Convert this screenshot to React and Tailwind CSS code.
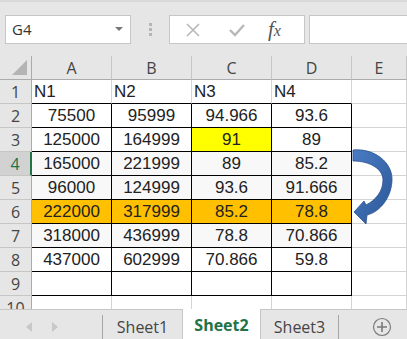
import React from "react";

const rows = [
  ["N1", "N2", "N3", "N4"],
  ["75500", "95999", "94.966", "93.6"],
  ["125000", "164999", "91", "89"],
  ["165000", "221999", "89", "85.2"],
  ["96000", "124999", "93.6", "91.666"],
  ["222000", "317999", "85.2", "78.8"],
  ["318000", "436999", "78.8", "70.866"],
  ["437000", "602999", "70.866", "59.8"],
  ["", "", "", ""],
  ["", "", "", ""],
];

const cols = ["A", "B", "C", "D", "E"];

function cellBg(r, c) {
  if (r === 2 && c === 2) return "bg-[#ffff00]";
  if (r === 5 && c < 4) return "bg-[#ffc000]";
  if ((r === 3 || r === 4 || r === 6) && c < 4) return "bg-[#f8f8f8]";
  return "bg-white";
}

function Cell({ r, c, value }) {
  const data = r >= 1 && r <= 8 && c < 4;
  const under = r === 0 && c < 4;
  const right = data ? "border-r-black" : "border-r-[#d4d4d4]";
  const bottom = data || under ? "border-b-black" : "border-b-[#d4d4d4]";
  const align = r === 0 ? "justify-start pl-[2px]" : "justify-center";
  return (
    <div
      className={`h-[24px] border-r border-b ${right} ${bottom} ${cellBg(r, c)} flex items-center ${align} text-[17px] text-[#222] leading-none`}
      style={{ fontFamily: "'Liberation Sans', Arial, sans-serif" }}
    >
      {value}
    </div>
  );
}

function CurvedArrow() {
  return (
    <svg
      className="absolute left-[352px] top-[86px]"
      width="44"
      height="86"
      viewBox="0 0 44 86"
    >
      <defs>
        <linearGradient id="ag" x1="0" y1="0" x2="1" y2="1">
          <stop offset="0" stopColor="#4a7cc4" />
          <stop offset="1" stopColor="#2b5797" />
        </linearGradient>
      </defs>
      <path
        d="M1,8 C22,6 40,20 40,37 C40,55 28,70 15,73 L14,82 L2,70 L12,59 L14,63 C24,58 31,49 31,38 C31,27 18,19 1,19 Z"
        fill="url(#ag)"
        stroke="#2a5190"
        strokeWidth="0.8"
      />
    </svg>
  );
}

export default function App() {
  const ui = { fontFamily: "'Open Sans', 'Noto Sans', sans-serif" };
  return (
    <div className="w-[407px] h-[339px] bg-[#e6e6e6] overflow-hidden flex flex-col" style={ui}>
      {/* formula bar */}
      <div className="h-[56px] shrink-0 border-t-2 border-[#d9d9d9] flex items-start pt-[13px] pl-[5px]">
        <div className="w-[126px] h-[29px] bg-white border border-[#c6c6c6] flex items-center justify-between pl-[6px] pr-[7px]">
          <span className="text-[15px] text-[#333]">G4</span>
          <svg width="8" height="5" viewBox="0 0 8 5">
            <path d="M0,0 L8,0 L4,4 Z" fill="#777" />
          </svg>
        </div>
        <div className="w-[38px] h-[29px] flex flex-col items-center justify-center gap-[2px]">
          <span className="w-[3px] h-[3px] bg-[#b5b5b5]" />
          <span className="w-[3px] h-[3px] bg-[#b5b5b5]" />
          <span className="w-[3px] h-[3px] bg-[#b5b5b5]" />
        </div>
        <div className="w-[136px] h-[29px] bg-white border border-[#c6c6c6] flex items-center pl-[16px]">
          <svg width="14" height="14" viewBox="0 0 14 14">
            <path d="M1,1 L13,13 M13,1 L1,13" stroke="#b8b8b8" strokeWidth="1.6" />
          </svg>
          <svg className="ml-[29px]" width="16" height="14" viewBox="0 0 16 14">
            <path d="M1,7 L6,12 L15,2" stroke="#b8b8b8" strokeWidth="2.4" fill="none" />
          </svg>
          <span
            className="ml-[23px] text-[21px] italic text-[#555] leading-none"
            style={{ fontFamily: "'Liberation Serif', 'Times New Roman', serif" }}
          >
            f<span className="text-[16px]">x</span>
          </span>
        </div>
        <div className="ml-[4px] flex-1 h-[29px] bg-white border border-[#c6c6c6] border-r-0" />
      </div>

      {/* grid */}
      <div className="relative h-[253px] shrink-0 overflow-hidden bg-white">
        <div className="grid grid-cols-[32px_80px_80px_80px_80px_1fr]">
          <div className="h-[24px] bg-[#e6e6e6] border-r border-b border-[#ababab] flex items-end justify-end pr-[4px] pb-[4px]">
            <svg width="15" height="15" viewBox="0 0 15 15">
              <path d="M15,0 L15,15 L0,15 Z" fill="#b4b4b4" />
            </svg>
          </div>
          {cols.map((c) => (
            <div
              key={c}
              className="h-[24px] bg-[#e6e6e6] border-r border-r-[#c6c6c6] border-b border-b-[#ababab] flex items-center justify-center text-[16px] text-[#444]"
            >
              {c}
            </div>
          ))}
          {rows.map((row, r) => (
            <React.Fragment key={r}>
              <div
                className={`h-[24px] border-b flex items-center justify-center text-[16px] ${
                  r === 3
                    ? "bg-[#d2d2d2] text-[#217346] border-r-2 border-r-[#217346] border-b-[#c6c6c6]"
                    : "bg-[#e6e6e6] text-[#444] border-r border-r-[#ababab] border-b-[#c6c6c6]"
                }`}
              >
                {r + 1}
              </div>
              {[...row, ""].map((v, c) => (
                <Cell key={c} r={r} c={c} value={v} />
              ))}
            </React.Fragment>
          ))}
        </div>
        <CurvedArrow />
      </div>

      {/* sheet tabs */}
      <div className="flex-1 border-t border-[#c6c6c6] bg-[#e6e6e6] flex items-stretch">
        <div className="w-[102px] flex items-center pl-[26px] gap-[20px]">
          <svg width="6" height="10" viewBox="0 0 6 10">
            <path d="M6,0 L6,10 L0,5 Z" fill="#c8c8c8" />
          </svg>
          <svg width="6" height="10" viewBox="0 0 6 10">
            <path d="M0,0 L0,10 L6,5 Z" fill="#c8c8c8" />
          </svg>
        </div>
        <div className="w-[80px] flex items-center justify-center text-[16px] text-[#444] border-l border-[#a6a6a6] my-[5px]">
          Sheet1
        </div>
        <div className="w-[79px] -mt-[1px] bg-white flex items-center justify-center text-[16px] font-bold text-[#217346] border-x border-[#c6c6c6] border-b-2 border-b-[#217346] mb-[2px]">
          Sheet2
        </div>
        <div className="w-[78px] flex items-center justify-center text-[16px] text-[#444] border-r border-[#a6a6a6] my-[5px]">
          Sheet3
        </div>
        <div className="flex-1 flex items-center justify-end pr-[15px]">
          <svg width="20" height="20" viewBox="0 0 20 20">
            <circle cx="10" cy="10" r="8.5" fill="none" stroke="#7a7a7a" strokeWidth="1.2" />
            <path d="M10,5 L10,15 M5,10 L15,10" stroke="#7a7a7a" strokeWidth="1.6" />
          </svg>
        </div>
      </div>
    </div>
  );
}
